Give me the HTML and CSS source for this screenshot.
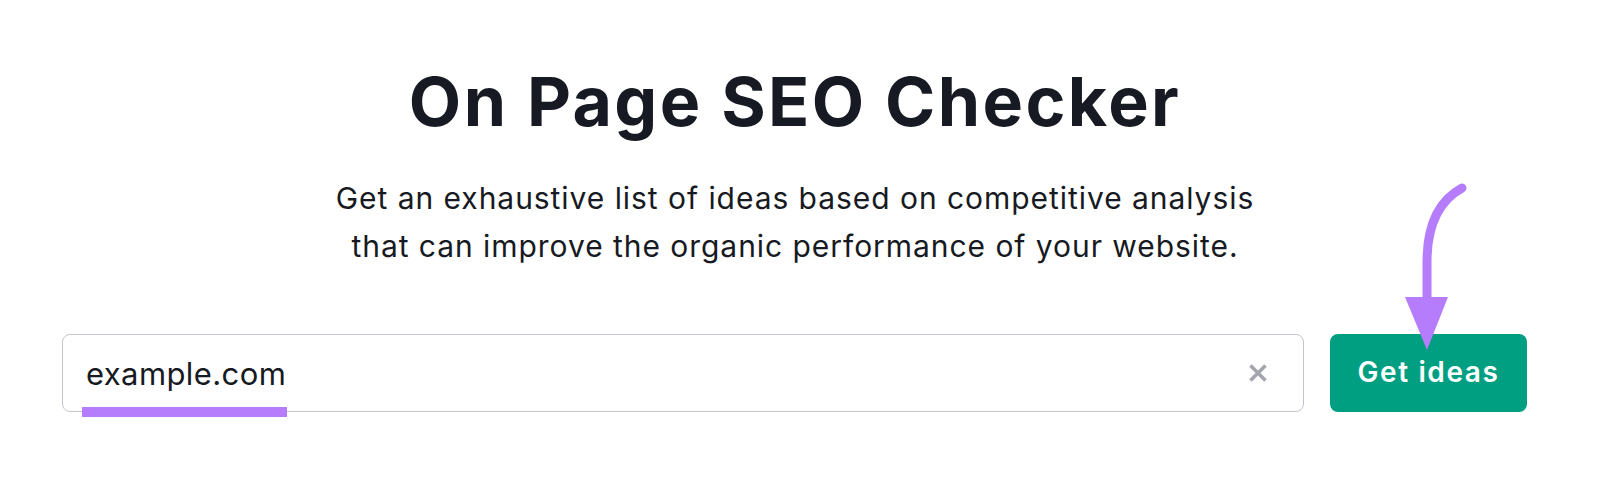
FILE: index.html
```html
<!DOCTYPE html>
<html lang="en">
<head>
<meta charset="utf-8">
<title>On Page SEO Checker</title>
<link rel="stylesheet" href="styles.css">
</head>
<body>
<main class="page">
  <header class="intro">
    <h1 class="title">On Page SEO Checker</h1>
    <p class="subtitle">Get an exhaustive list of ideas based on competitive analysis<br>that can improve the organic performance of your website.</p>
  </header>
  <form class="search">
    <div class="field">
      <span class="value">example.com</span>
      <span class="mark"></span>
      <svg class="clear" width="20" height="20" viewBox="0 0 20 20" aria-hidden="true">
        <path d="M2.5 2.5 L17.5 17.5 M17.5 2.5 L2.5 17.5" stroke="#a4a5ae" stroke-width="3.6" stroke-linecap="butt" fill="none"/>
      </svg>
    </div>
    <button class="btn" type="button">Get ideas</button>
  </form>
  <svg class="arrow" width="1600" height="487" viewBox="0 0 1600 487" aria-hidden="true">
    <path d="M1462 188 C1440 200 1427 224 1427 262 L1427 302" stroke="#b57cfb" stroke-width="9" stroke-linecap="round" fill="none"/>
    <polygon points="1405,297 1448,297 1427,350" fill="#b57cfb"/>
  </svg>
</main>
</body>
</html>
```
FILE: styles.css
```css
html, body {
  margin: 0;
  padding: 0;
  background: #ffffff;
}
body {
  font-family: Inter, "Noto Sans", "Liberation Sans", sans-serif;
  color: #171a22;
}
.page {
  position: relative;
  width: 1600px;
  height: 487px;
  display: flex;
  flex-direction: column;
  box-sizing: border-box;
  padding-top: 60px;
  overflow: hidden;
}
.intro {
  display: flex;
  flex-direction: column;
  align-items: center;
  padding-right: 10px;
}
.title {
  margin: 0;
  font-size: 68px;
  line-height: 82px;
  font-weight: 700;
  letter-spacing: 2.4px;
  color: #171a22;
}
.subtitle {
  margin: 32px 0 0;
  font-size: 30px;
  line-height: 48px;
  font-weight: 400;
  letter-spacing: 0.95px;
  text-align: center;
  color: #171a22;
}
.search {
  display: flex;
  gap: 26px;
  margin-top: 64px;
  padding: 0 73px 0 62px;
}
.field {
  position: relative;
  flex: 1;
  height: 78px;
  box-sizing: border-box;
  border: 1px solid #c4c5cc;
  border-radius: 8px;
  display: flex;
  align-items: center;
  padding: 0 35px 0 23px;
}
.value {
  flex: 1;
  font-size: 31px;
  letter-spacing: 0.4px;
  color: #171a22;
}
.mark {
  position: absolute;
  left: 19px;
  top: 72px;
  width: 205px;
  height: 10px;
  background: #b57cfb;
}
.clear {
  display: block;
}
.btn {
  width: 197px;
  height: 78px;
  border: 0;
  border-radius: 8px;
  background: #009f81;
  color: #ffffff;
  font-family: Inter, "Noto Sans", "Liberation Sans", sans-serif;
  font-size: 28px;
  font-weight: 600;
  letter-spacing: 1.6px;
  padding: 0 0 2px;
}
.arrow {
  position: absolute;
  left: 0;
  top: 0;
  pointer-events: none;
}
```
